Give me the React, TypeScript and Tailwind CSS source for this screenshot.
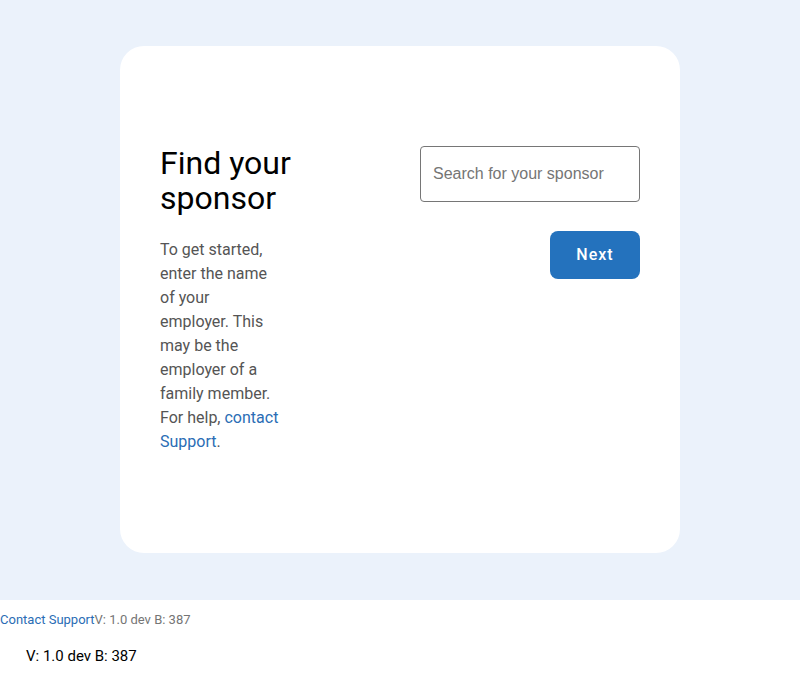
export default function App() {
  return (
    <div className="min-h-screen bg-white font-['Roboto',sans-serif]">
      <div className="bg-[#ebf2fb] h-[600px] pt-[46px]">
        <div className="mx-auto w-[560px] h-[507px] bg-white rounded-[24px] px-10 pt-[100px] flex justify-between">
          <div className="w-[122px]">
            <h1 className="text-[32px] leading-[35px] text-black font-normal whitespace-nowrap">
              Find your
              <br />
              sponsor
            </h1>
            <p className="mt-[22px] text-[16px] leading-[24px] text-[#555555]">
              To get started, enter the name of your employer. This may be the employer of a family member. For help,{" "}
              <a href="#" className="text-[#2a6db5]">contact Support</a>.
            </p>
          </div>
          <div className="w-[220px] flex flex-col items-end">
            <input
              type="text"
              placeholder="Search for your sponsor"
              className="w-full h-[56px] border border-[#767676] rounded-[4px] px-3 text-[16px] font-['Liberation_Sans',Arial,sans-serif] placeholder:text-[#757575] outline-none"
            />
            <button className="mt-[29px] w-[90px] h-[48px] rounded-[8px] bg-[#2472bd] text-white text-[16px] font-medium tracking-[1px]">
              Next
            </button>
          </div>
        </div>
      </div>
      <div className="pt-[12px] text-[13px] leading-[15px]">
        <a href="#" className="text-[#2a6db5]">Contact Support</a>
        <span className="text-[#757575]">V: 1.0 dev B: 387</span>
      </div>
      <div className="pl-[26px] pt-[21px] text-[15px] leading-[17px] text-black">V: 1.0 dev B: 387</div>
    </div>
  );
}
